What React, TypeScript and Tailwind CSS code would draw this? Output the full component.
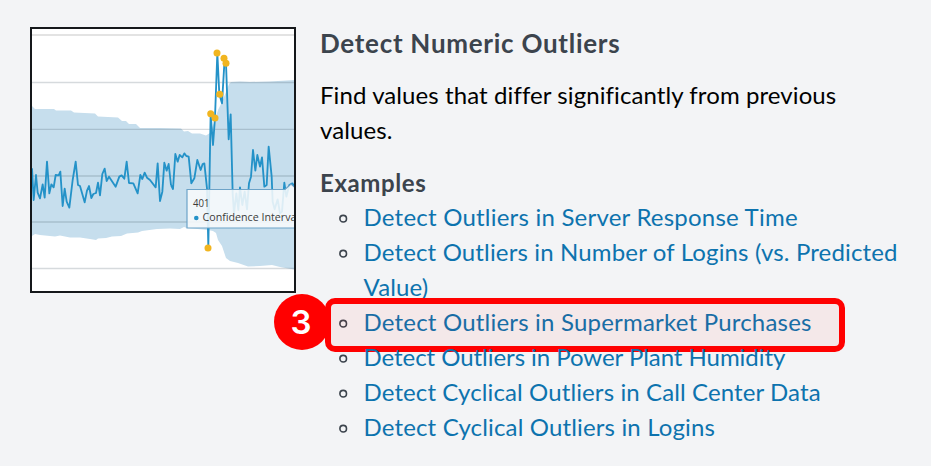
const examples = [
  { label: 'Detect Outliers in Server Response Time', tracking: 'tracking-[0.22px]' },
  { label: 'Detect Outliers in Number of Logins (vs. Predicted Value)', tracking: 'tracking-[0.15px]' },
  { label: 'Detect Outliers in Supermarket Purchases', tracking: 'tracking-[0.2px]', step: 3 },
  { label: 'Detect Outliers in Power Plant Humidity', tracking: 'tracking-[-0.05px]' },
  { label: 'Detect Cyclical Outliers in Call Center Data', tracking: 'tracking-[0.11px]' },
  { label: 'Detect Cyclical Outliers in Logins', tracking: 'tracking-[0.15px]' },
];

const outliers = [
  [217, 53], [224, 58.3], [226, 63.3], [219.7, 94.3], [210.7, 113.8], [215, 118], [208, 248],
];

function OutlierChart() {
  return (
    <svg viewBox="32 29 262 262" className="block size-full">
      <rect x="32" y="29" width="262" height="262" fill="#fff" />
      <path
        d="M32 106L35 109H54L56 110.5H71L74 112.5L95 113.5L98 116.5L118 117.5L122 121H126L129 124H136L140 128H160L181 128.5L184 131.5L188 131L192 133.5H200L206 135.5L210 133L214 123L218 110L222 102L226 92L229 84L231 82L240 81.5L250 82L270 81.5L294 80V269.5L280 267L272 265L260 266L248 266.5L238 263L230 261L226 258L222 246L218 240L216 233L213 231L208 230L187 228L184 227L180 229L170 228.5L157 229L142 231L138 232.5L127 233.5L121 236L112 236.5L106 238L98 238.5L96 240L90 239L80 237.5H70L60 235.5L55 236.5L40 235L35 234L32 236Z"
        fill="#c6deed"
      />
      <path d="M32 35H294" stroke="#e3e3e3" strokeWidth="2" />
      <path d="M32 82.5H294M32 129.3H294M32 176H294M32 222H294M32 268.5H294" stroke="#345" strokeOpacity=".2" strokeWidth="1.3" />
      <g fill="none" stroke="#2492c8" strokeLinejoin="round" strokeWidth="5.5">
        <polyline
          transform="translate(20 150) scale(.33333)"
          points="36,55 41,150 48,75 53,128 60,145 68,103 74,143 81,35 88,130 94,103 101,112 107,75 116,76 121,65 128,168 134,116 140,155 148,173 158,90 167,35 174,105 180,108 194,157 201,122 207,108 214,144 220,132 228,129 234,98 240,136 247,72 254,56 260,93 267,80 287,110 298,80 305,76 313,86 320,35 327,99 340,100 353,130 361,75 367,87 374,68 381,83 390,90 407,112 413,40 420,153 427,125 433,38 440,62 446,42 453,105"
        />
        <polyline
          transform="translate(160 150) scale(.33333)"
          points="33,105 39,117 46,12 53,35 59,15 67,22 73,10 79,18 86,20 94,100 103,85 112,30 122,60 128,42 133,40 141,115 145,290 150,0 152,-108 159,-15 165,-97 172,-291 178,-167 186,-140 194,-275 198,-260 206,-32 212,-107 218,130 222,190 229,130 235,180 240,112 247,165 254,125 261,178 267,100 273,80 279,0 286,62 292,15 300,50 306,22 313,110 320,105 326,-10 335,80 338,155 344,178 353,148 360,190 366,185 373,98 379,140 388,105 397,100 403,110"
        />
      </g>
      {outliers.map(([x, y]) => (
        <circle key={`${x}-${y}`} cx={x} cy={y} r="3.5" fill="#f1b51f" />
      ))}
      <path d="M187 189.5H285L291 184L297 189.5V228H187Z" fill="#f8fafc" fillOpacity=".87" stroke="#6da3c8" strokeWidth="1.2" />
      <g fill="#3b3b3b" fontFamily="'Open Sans', sans-serif" fontSize="11">
        <text x="193" y="207.3" textLength="16.5" lengthAdjust="spacingAndGlyphs">401</text>
        <text x="202.5" y="221.3" textLength="94" lengthAdjust="spacingAndGlyphs">Confidence Interva</text>
      </g>
      <circle cx="196.3" cy="218" r="2.3" fill="#2492c8" />
    </svg>
  );
}

function StepMarker({ step }: { step: number }) {
  return (
    <div className="absolute -top-1.5 -left-[7px] flex h-[54px] w-[520px] items-center rounded-[10px] border-6 border-[#ff0000] bg-[#ff0000]/5">
      <div className="-mt-1.5 -ml-[57px] flex size-14 shrink-0 items-center justify-center rounded-full bg-[#ff0000] font-[Inter,sans-serif] text-[33px] leading-none font-semibold text-white [clip-path:inset(0_3px_0_0)]">
        <span className="-ml-0.5">{step}</span>
      </div>
    </div>
  );
}

export default function App() {
  return (
    <main className="flex h-[466px] w-[931px] items-start gap-6 overflow-hidden bg-[#f3f4f6] pt-[27px] pl-[30px] font-[Lato,sans-serif] text-2xl leading-[35px]">
      <div className="size-[266px] shrink-0 border-2 border-[#15181b]">
        <OutlierChart />
      </div>
      <section className="-mt-px flex w-[600px] flex-col">
        <h2 className="text-[26px] leading-[35px] font-bold tracking-[0.72px] text-[#3c444d]">Detect Numeric Outliers</h2>
        <p className="w-[560px] pt-4 tracking-[0.09px] text-black">
          Find values that differ significantly from previous values.
        </p>
        <h3 className="pt-[18px] font-bold tracking-[0.6px] text-[#3c444d]">Examples</h3>
        <ul className="-mt-px flex flex-col">
          {examples.map(({ label, tracking, step }) => (
            <li key={label} className="relative flex items-start gap-[15.5px] pl-[19px]">
              <svg viewBox="0 0 9 35" className="h-[35px] w-[9px] shrink-0">
                <circle cx="4.2" cy="19.7" r="3.3" fill="none" stroke="#3c444d" strokeWidth="1.6" />
              </svg>
              <a className={`text-[#0d73ae] ${tracking}`}>{label}</a>
              {step && (
                <div className="absolute top-0 left-3">
                  <StepMarker step={step} />
                </div>
              )}
            </li>
          ))}
        </ul>
      </section>
    </main>
  );
}
